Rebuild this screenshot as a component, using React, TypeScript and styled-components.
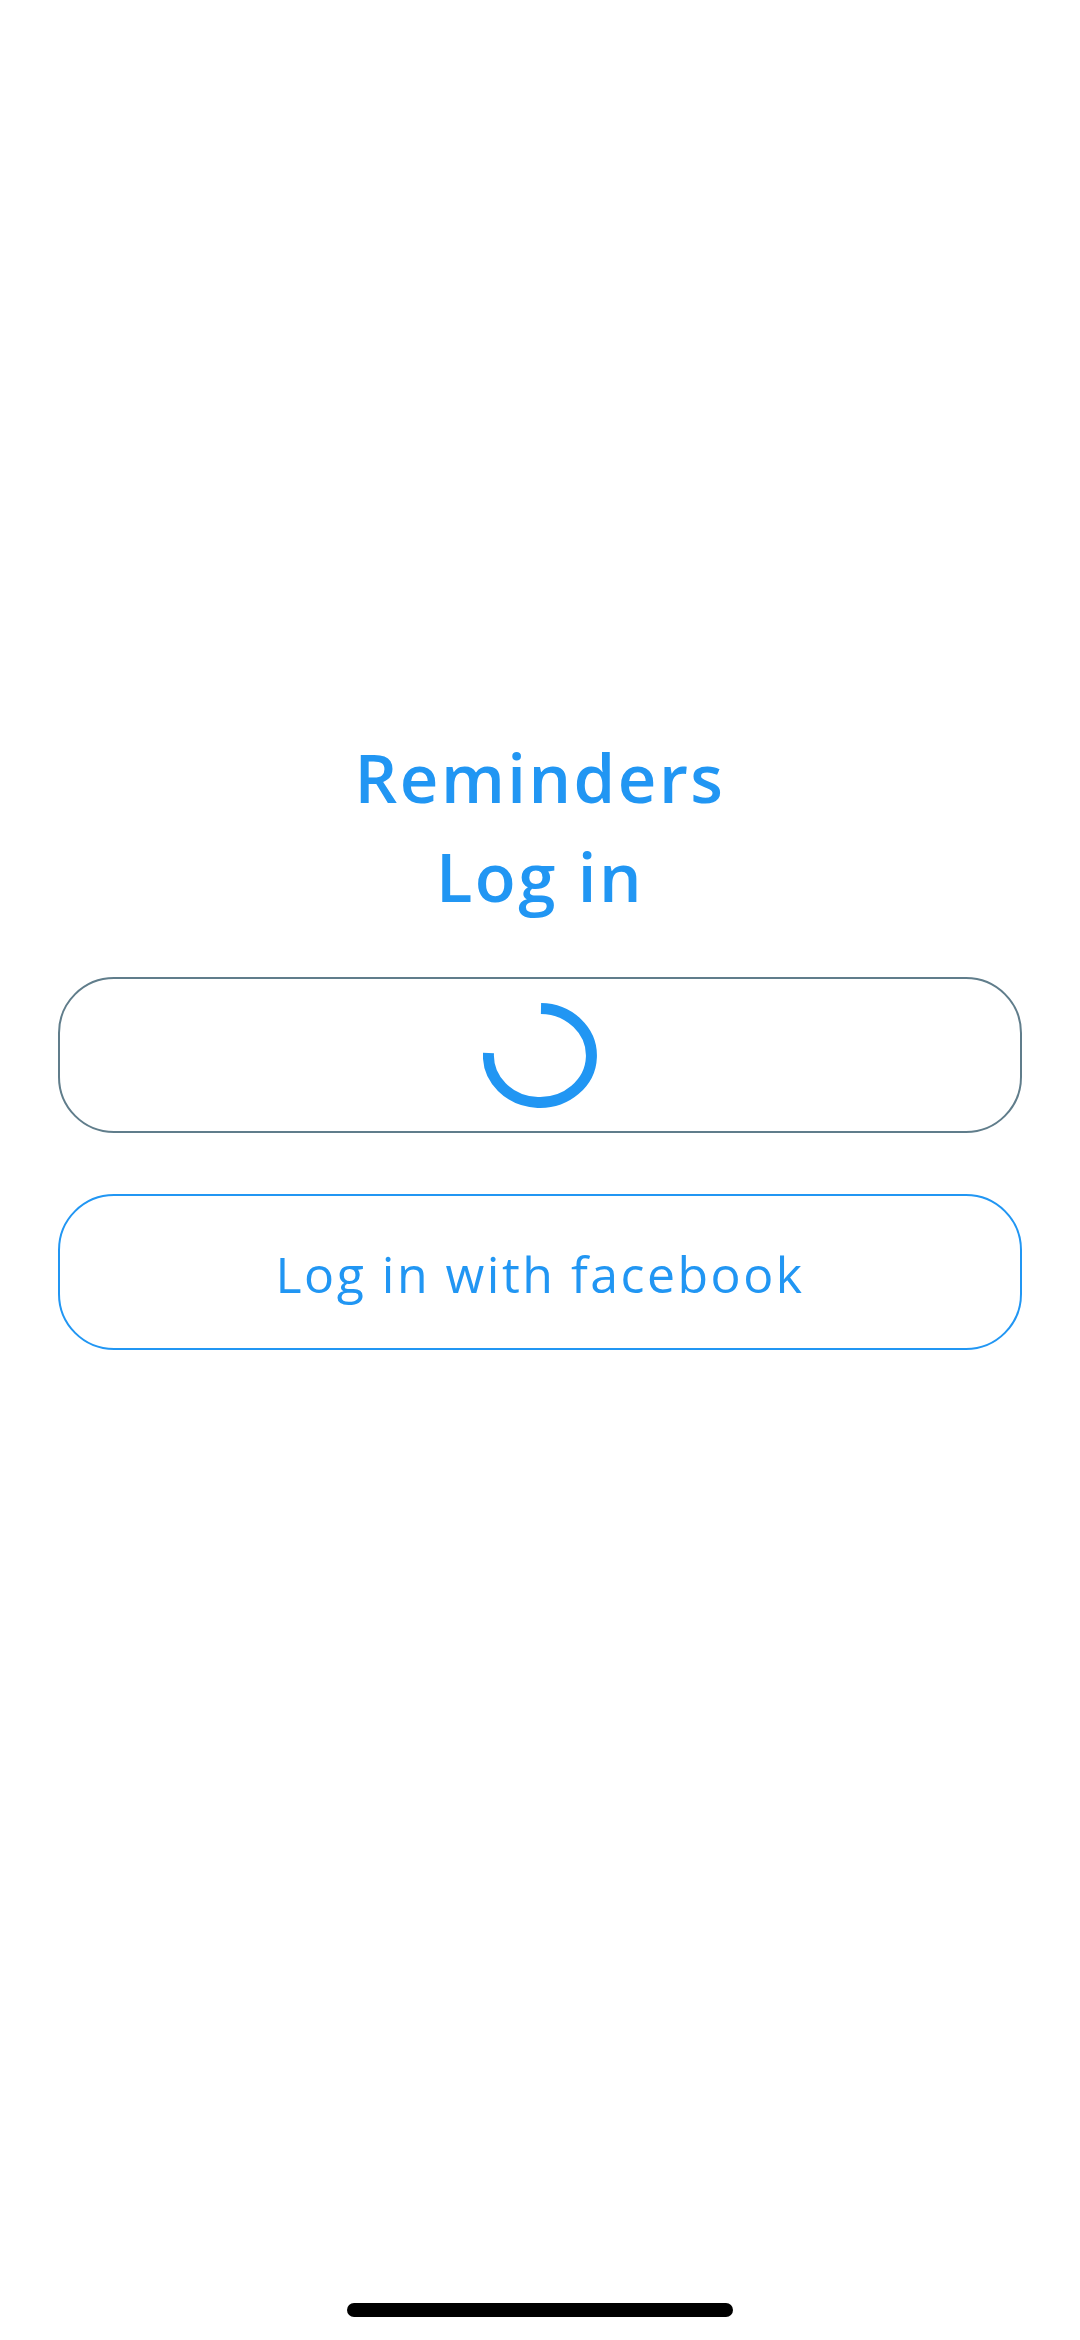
import React from "react";
import styled, { createGlobalStyle } from "styled-components";

const GlobalStyle = createGlobalStyle`
  html, body {
    margin: 0;
    padding: 0;
    background: #ffffff;
  }
  body {
    font-family: "Open Sans", "Noto Sans", sans-serif;
  }
  * { box-sizing: border-box; }
`;

const Screen = styled.div`
  position: relative;
  width: 1080px;
  height: 2340px;
  background: #ffffff;
  display: flex;
  flex-direction: column;
  align-items: center;
  padding: 728px 58px 0;
`;

const Title = styled.h1`
  margin: 0;
  font-family: "Open Sans", sans-serif;
  font-weight: 600;
  font-size: 67px;
  line-height: 99px;
  letter-spacing: 2.5px;
  color: #2196f3;
  text-align: center;
`;

const Buttons = styled.div`
  margin-top: 51px;
  width: 100%;
  display: flex;
  flex-direction: column;
  gap: 61px;
`;

const OutlineButton = styled.button<{ $tone: "grey" | "blue" }>`
  width: 100%;
  height: 156px;
  border-radius: 56px;
  border: 2.5px solid ${(p) => (p.$tone === "grey" ? "#607d8b" : "#2196f3")};
  background: #ffffff;
  display: flex;
  align-items: center;
  justify-content: center;
  padding: 0;
  font-family: "Open Sans", sans-serif;
  font-weight: 400;
  font-size: 50px;
  letter-spacing: 2.5px;
  color: #2196f3;
  cursor: pointer;
`;

const Label = styled.span`
  display: block;
  padding-top: 4px;
`;

const HomeIndicator = styled.div`
  position: absolute;
  left: 347px;
  top: 2303px;
  width: 386px;
  height: 14px;
  border-radius: 7px;
  background: #000000;
`;

const Spinner = () => (
  <svg width="114" height="105" viewBox="0 0 114 105" aria-hidden="true">
    <path
      d="M 58 5.5 A 51.5 47 0 1 1 5.5 50"
      fill="none"
      stroke="#2196f3"
      strokeWidth="11"
      strokeLinecap="butt"
    />
  </svg>
);

export default function App() {
  return (
    <>
      <GlobalStyle />
      <Screen>
        <Title>
          Reminders
          <br />
          Log in
        </Title>
        <Buttons>
          <OutlineButton $tone="grey">
            <Spinner />
          </OutlineButton>
          <OutlineButton $tone="blue">
            <Label>Log in with facebook</Label>
          </OutlineButton>
        </Buttons>
        <HomeIndicator />
      </Screen>
    </>
  );
}
